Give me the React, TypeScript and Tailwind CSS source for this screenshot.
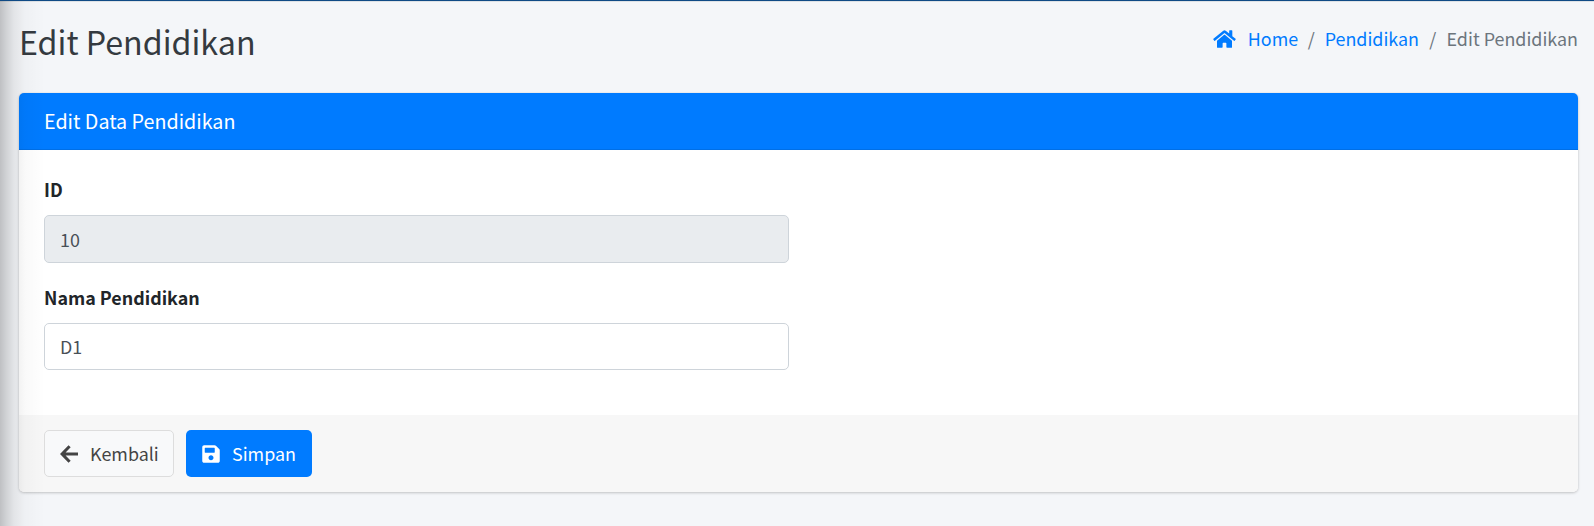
import { FaHome, FaSave } from "react-icons/fa";

function ArrowLeft() {
  return (
    <svg viewBox="0 0 18 18" className="mr-[12px] h-[18px] w-[18px]" fill="none" stroke="currentColor" strokeWidth="3">
      <path d="M9.6 1.2 2.1 9l7.5 7.8M3 9h15" />
    </svg>
  );
}

function Breadcrumb() {
  return (
    <nav className="flex h-[27px] items-center text-[17.9px] leading-[27px] text-[#6c757d]">
      <FaHome className="mr-[12px] h-[20px] w-[23px] text-[#007bff]" />
      <a className="text-[#007bff]">Home</a>
      <span className="pr-[10px] pl-[9.5px]">/</span>
      <a className="text-[#007bff]">Pendidikan</a>
      <span className="px-[10.25px]">/</span>
      <span>Edit Pendidikan</span>
    </nav>
  );
}

export default function App() {
  return (
    <div className="relative h-[526px] w-full overflow-hidden border-t border-[#0f4a85] bg-[#f4f6f9] font-['Noto_Sans_CJK_SC',sans-serif] text-[#212529]">
      <header className="flex h-[92px] items-start justify-between border-t border-[#dee2e6] pl-[19px] pr-[16px]">
        <h1 className="mt-[15px] text-[32.2px] leading-[48px] text-[#343a40]">Edit Pendidikan</h1>
        <div className="mt-[23px]"><Breadcrumb /></div>
      </header>
      <main className="mr-[16px] ml-[19px] flex h-[399px] flex-col overflow-hidden rounded-[5px] bg-white shadow-[0_0_1px_rgba(0,0,0,0.13),0_1px_3px_rgba(0,0,0,0.2)]">
        <div className="flex h-[57px] items-center border-b border-[#006fe6] bg-[#007bff] px-[25px] text-[19.7px] text-white">Edit Data Pendidikan</div>
        <form className="flex grow flex-col px-[25px] pt-[26px]">
          <label className="h-[39px] text-[17.9px] leading-[27px] font-bold">ID</label>
          <input readOnly value="10" className="h-[48px] w-[745px] rounded-[5px] border border-[#ced4da] bg-[#e9ecef] px-[15px] text-[17.9px] text-[#495057]" />
          <label className="mt-[21px] h-[39px] text-[17.9px] leading-[27px] font-bold">Nama Pendidikan</label>
          <input defaultValue="D1" className="h-[47px] w-[745px] rounded-[5px] border border-[#ced4da] bg-white px-[15px] pb-[2px] text-[17.9px] text-[#495057]" />
        </form>
        <div className="flex h-[77px] gap-[12px] bg-[#f7f7f7] px-[25px] pt-[15px]">
          <button className="flex h-[47px] w-[130px] items-center rounded-[5px] border border-[#ddd] bg-[#f8f9fa] pl-[15px] text-[17.9px] text-[#444]">
            <ArrowLeft />Kembali
          </button>
          <button className="flex h-[47px] w-[126px] items-center rounded-[5px] bg-[#007bff] pl-[16px] text-[17.9px] text-white">
            <FaSave className="mr-[12px] h-[20px] w-[18px]" />Simpan
          </button>
        </div>
      </main>
      <div className="pointer-events-none absolute inset-y-0 left-0 w-[45px] bg-[linear-gradient(to_right,rgba(0,0,0,0.22)_0px,rgba(0,0,0,0.15)_6px,rgba(0,0,0,0.07)_14px,rgba(0,0,0,0.025)_25px,rgba(0,0,0,0)_45px)]" />
    </div>
  );
}
